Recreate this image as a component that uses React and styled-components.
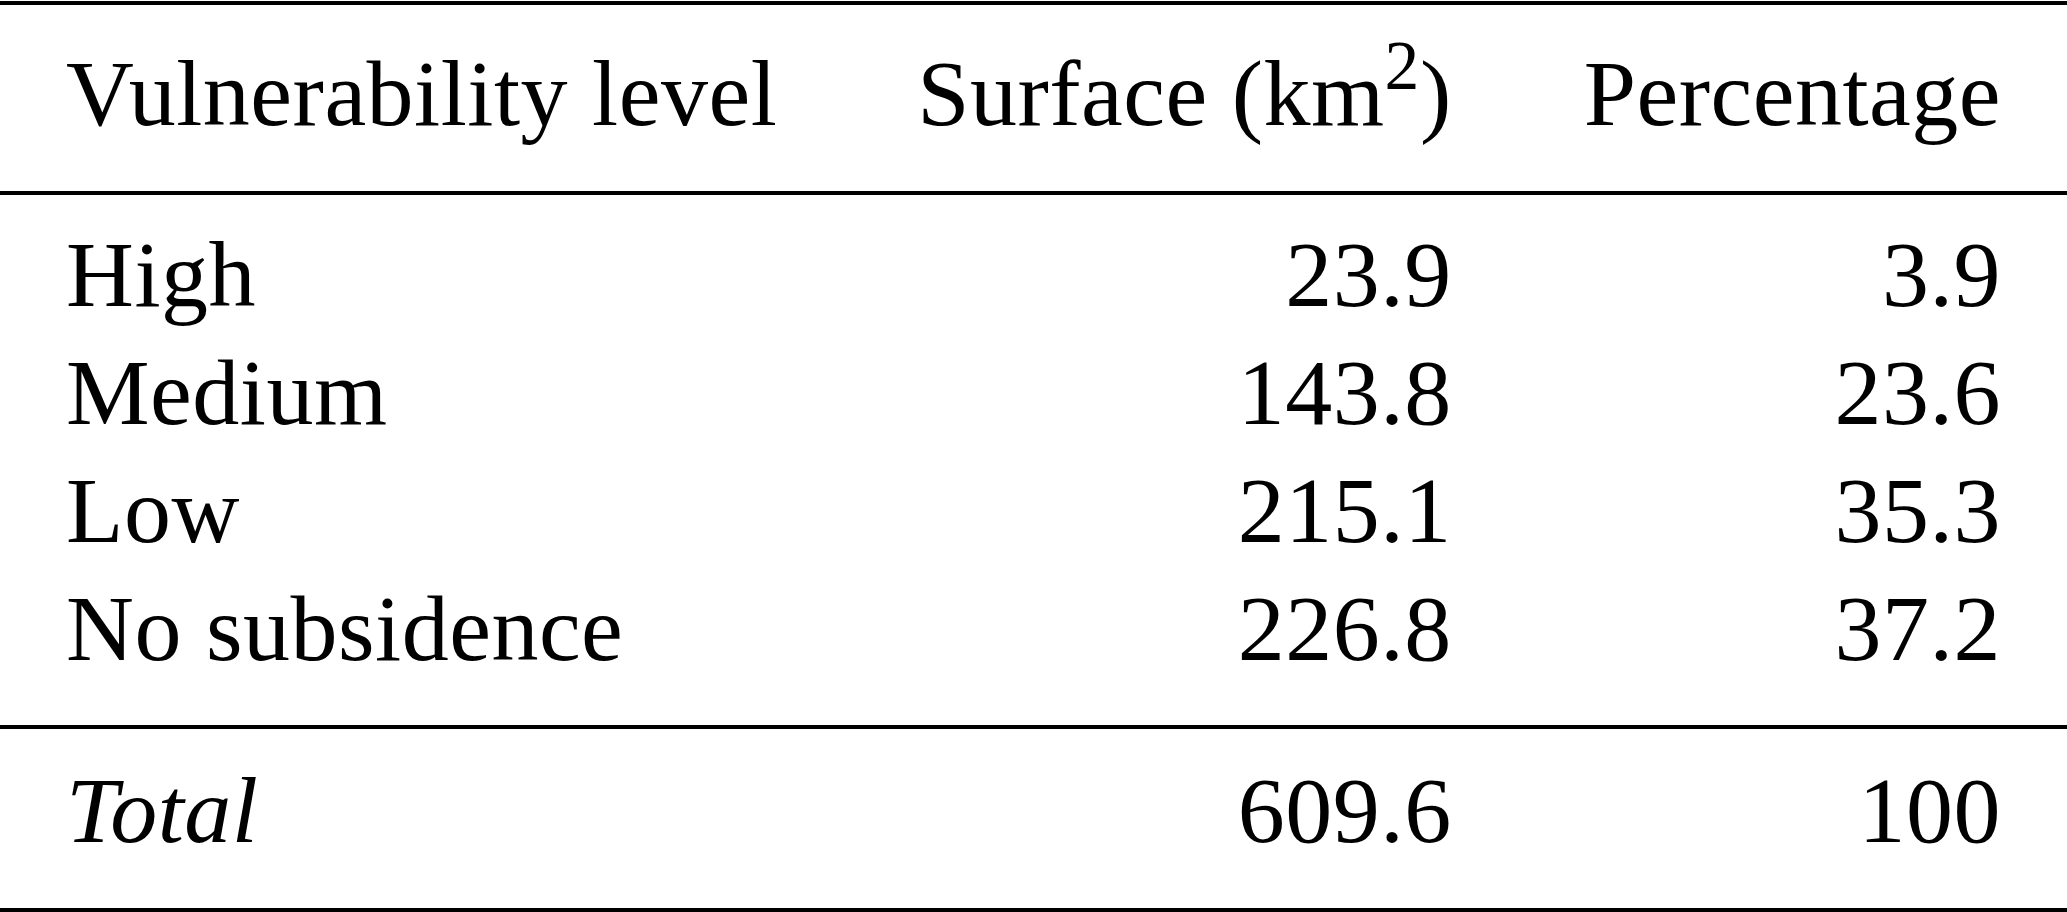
import React from 'react';
import styled, { createGlobalStyle } from 'styled-components';

const GlobalStyle = createGlobalStyle`
  html, body {
    margin: 0;
    padding: 0;
    background: #ffffff;
  }
  body {
    font-family: "Liberation Serif", "Times New Roman", serif;
    color: #000000;
  }
`;

const Table = styled.div`
  display: grid;
  grid-template-columns: 1fr auto auto;
  width: 2067px;
  font-size: 94px;
  line-height: 118px;
  letter-spacing: 0.5px;
`;

const Rule = styled.div`
  grid-column: 1 / -1;
  height: 4px;
  background: #000000;
  margin-top: ${(p) => p.$top || 0}px;
`;

const Gap = styled.div`
  grid-column: 1 / -1;
  height: ${(p) => p.$h}px;
`;

const Cell = styled.div`
  padding: 0 66px;
  text-align: ${(p) => (p.$num ? 'right' : 'left')};
  font-style: ${(p) => (p.$italic ? 'italic' : 'normal')};
  white-space: nowrap;
  &:nth-child(3n) {
    padding-right: 67px;
  }
`;

const Sup = styled.sup`
  font-size: 0.74em;
  line-height: 0;
  vertical-align: 36px;
`;

const rows = [
  ['High', '23.9', '3.9'],
  ['Medium', '143.8', '23.6'],
  ['Low', '215.1', '35.3'],
  ['No subsidence', '226.8', '37.2'],
];

const Row = ({ cells, italic }) => (
  <>
    <Cell $italic={italic}>{cells[0]}</Cell>
    <Cell $num>{cells[1]}</Cell>
    <Cell $num>{cells[2]}</Cell>
  </>
);

export default function App() {
  return (
    <>
      <GlobalStyle />
      <Table>
        <Rule $top={1} />
        <Gap $h={29} />
        <Cell>Vulnerability level</Cell>
        <Cell $num>
          Surface (km<Sup>2</Sup>)
        </Cell>
        <Cell $num>Percentage</Cell>
        <Gap $h={39} />
        <Rule />
        <Gap $h={20} />
        {rows.map((r) => (
          <Row key={r[0]} cells={r} />
        ))}
        <Gap $h={38} />
        <Rule />
        <Gap $h={22} />
        <Row cells={['Total', '609.6', '100']} italic />
        <Gap $h={39} />
        <Rule />
      </Table>
    </>
  );
}
